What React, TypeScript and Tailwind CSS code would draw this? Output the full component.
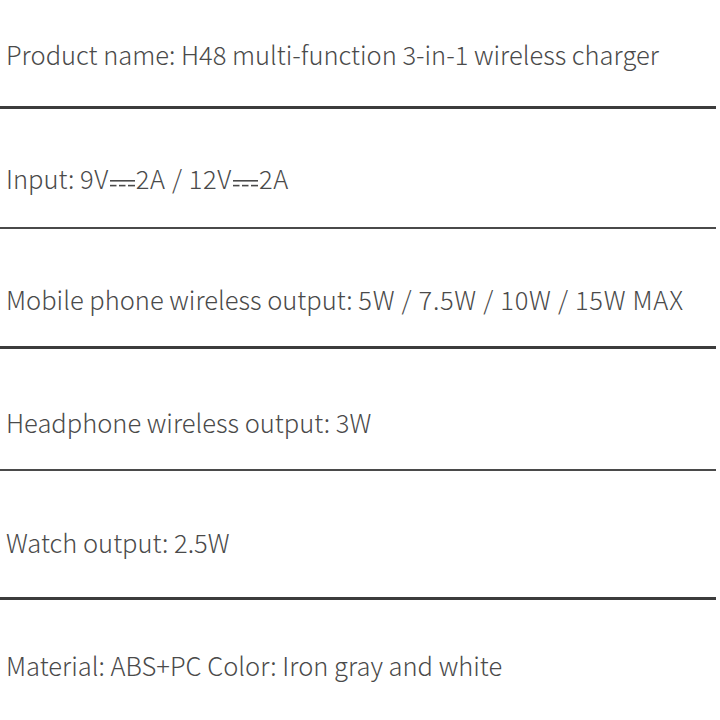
import React from "react";

function DC() {
  return (
    <svg width="27" height="24" viewBox="0 0 27 24" className="inline-block align-top" aria-hidden="true">
      <line x1="1" y1="14.8" x2="26" y2="14.8" stroke="#4a4a4a" strokeWidth="1.6" />
      <line x1="1" y1="19.6" x2="7.5" y2="19.6" stroke="#4a4a4a" strokeWidth="1.6" />
      <line x1="10" y1="19.6" x2="16.5" y2="19.6" stroke="#4a4a4a" strokeWidth="1.6" />
      <line x1="19" y1="19.6" x2="26" y2="19.6" stroke="#4a4a4a" strokeWidth="1.6" />
    </svg>
  );
}

export default function App() {
  const text = "pl-[6px] text-[25.5px] leading-[24px] text-[#4a4a4a] font-light whitespace-nowrap";
  return (
    <div
      className="w-[720px] h-[720px] bg-white overflow-hidden flex flex-col"
      style={{ fontFamily: '"Noto Sans CJK SC", "Noto Sans", sans-serif' }}
    >
      <div className="h-[106px] pt-[42px] shrink-0">
        <p className={text}>Product name: H48 multi-function 3-in-1 wireless charger</p>
      </div>
      <div className="h-[3px] w-[716px] bg-[#3c3c3c] shrink-0" />
      <div className="h-[118px] pt-[57px] shrink-0">
        <p className={text}>
          Input: <span className="tracking-[0.6px]">9V<DC />2A / 12V<DC />2A</span>
        </p>
      </div>
      <div className="h-[2px] w-[716px] bg-[#4a4a4a] shrink-0" />
      <div className="h-[117px] pt-[58px] shrink-0">
        <p className={text}>
          Mobile phone wireless output: <span className="tracking-[0.7px]">5W / 7.5W / 10W / 15W MAX</span>
        </p>
      </div>
      <div className="h-[3px] w-[716px] bg-[#3c3c3c] shrink-0" />
      <div className="h-[120px] pt-[61px] shrink-0">
        <p className={text}>Headphone wireless output: 3W</p>
      </div>
      <div className="h-[2px] w-[716px] bg-[#4a4a4a] shrink-0" />
      <div className="h-[126px] pt-[59px] shrink-0">
        <p className={text}>Watch output: 2.5W</p>
      </div>
      <div className="h-[3px] w-[716px] bg-[#3c3c3c] shrink-0" />
      <div className="pt-[53px] shrink-0">
        <p className={text}>Material: ABS+PC Color: Iron gray and white</p>
      </div>
    </div>
  );
}
